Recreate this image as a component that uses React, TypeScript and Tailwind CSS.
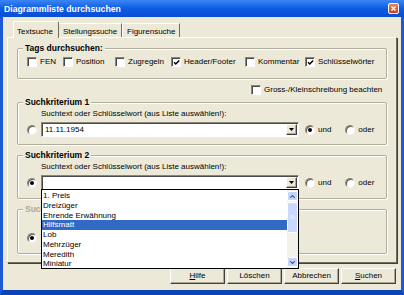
import React from "react";

const face = "bg-[#ECE9D8]";

function Check({ checked }: { checked?: boolean }) {
  return (
    <span className="flex h-[10px] w-[10px] shrink-0 items-center justify-center border border-t-[#8a877a] border-l-[#8a877a] border-r-white border-b-white bg-white shadow-[inset_1px_1px_0_#4a4a44]">
      {checked && (
        <svg width="7" height="7" viewBox="0 0 7 7">
          <path d="M1 3.2 L2.8 5 L6.2 1.4" stroke="#000" strokeWidth="1.5" fill="none" />
        </svg>
      )}
    </span>
  );
}

function Radio({ checked }: { checked?: boolean }) {
  return (
    <span className="flex h-[10px] w-[10px] shrink-0 items-center justify-center rounded-full border border-t-[#8a877a] border-l-[#8a877a] border-r-[#f4f3ee] border-b-[#f4f3ee] bg-white shadow-[inset_1px_1px_0_#5a5a52]">
      {checked && <span className="h-[4px] w-[4px] rounded-full bg-black" />}
    </span>
  );
}

function Group({
  title,
  disabled,
  className,
  children,
}: {
  title: string;
  disabled?: boolean;
  className?: string;
  children?: React.ReactNode;
}) {
  return (
    <div
      className={`relative ml-[9px] w-[370px] rounded-[2px] border border-[#b0ad9f] shadow-[inset_1px_1px_0_#fff,1px_1px_0_#fff] ${className ?? ""}`}
    >
      <span
        className={`absolute left-[5px] top-[-6px] ${face} px-[2px] text-[8.5px] font-bold leading-[10px] ${
          disabled ? "text-[#aca899]" : "text-black"
        }`}
      >
        {title}
      </span>
      {children}
    </div>
  );
}

function Combo({ value, children }: { value?: string; children?: React.ReactNode }) {
  return (
    <div className="relative h-[15px] w-[258px] shrink-0">
      <div className="flex h-full w-full border border-t-[#8a877a] border-l-[#8a877a] border-r-white border-b-white bg-white shadow-[inset_1px_1px_0_#4a4a44]">
        <span className="flex-1 pl-[3px] pt-[1px] text-[8px] leading-[12px]">{value}</span>
        <span className="my-[1px] mr-[1px] flex w-[11px] items-center justify-center border border-t-white border-l-white border-r-[#404040] border-b-[#404040] bg-[#ECE9D8] shadow-[inset_-1px_-1px_0_#aca899]">
          <svg width="5" height="3" viewBox="0 0 5 3">
            <path d="M0 0h5L2.5 3z" fill="#000" />
          </svg>
        </span>
      </div>
      {children}
    </div>
  );
}

const entries = ["1. Preis", "Dreizüger", "Ehrende Erwähnung", "Hilfsmatt", "Lob", "Mehrzüger", "Meredith", "Miniatur"];

function DropList() {
  return (
    <div className="absolute left-0 top-[14px] z-20 flex h-[80px] w-[258px] border border-black bg-white">
      <div className="flex-1 pt-[1px]">
        {entries.map((e) => (
          <div
            key={e}
            className={`h-[9.75px] pl-[1px] text-[8px] leading-[9.75px] ${
              e === "Hilfsmatt" ? "bg-[#316AC5] text-white" : "text-black"
            }`}
          >
            {e}
          </div>
        ))}
      </div>
      <div className="flex w-[11px] flex-col bg-[#f2f1ea] py-[1px]">
        <span className="flex h-[10px] items-center justify-center rounded-[2px] border border-white bg-[#c4d5fb]">
          <svg width="5" height="3" viewBox="0 0 5 3">
            <path d="M0 3 L2.5 0.5 L5 3" stroke="#4d6185" strokeWidth="1.2" fill="none" />
          </svg>
        </span>
        <span className="mt-[1px] flex h-[31px] items-center justify-center rounded-[2px] border border-white bg-[#c9d8fc]">
          <svg width="5" height="5" viewBox="0 0 5 5">
            <path d="M0 1h5M0 3h5" stroke="#eef3ff" strokeWidth="1" />
          </svg>
        </span>
        <span className="flex-1" />
        <span className="flex h-[10px] items-center justify-center rounded-[2px] border border-white bg-[#c4d5fb]">
          <svg width="5" height="3" viewBox="0 0 5 3">
            <path d="M0 0 L2.5 2.5 L5 0" stroke="#4d6185" strokeWidth="1.2" fill="none" />
          </svg>
        </span>
      </div>
    </div>
  );
}

function Btn({ children }: { children: React.ReactNode }) {
  return (
    <div className="flex h-[16px] w-[55px] items-center justify-center border border-t-white border-l-white border-r-[#404040] border-b-[#404040] bg-[#ECE9D8] text-[8px] leading-[10px] shadow-[inset_-1px_-1px_0_#aca899]">
      {children}
    </div>
  );
}

export default function App() {
  const tags: [string, number, boolean][] = [
    ["FEN", 36, false],
    ["Position", 52, false],
    ["Zugregeln", 56, false],
    ["Header/Footer", 74, true],
    ["Kommentar", 60, false],
    ["Schlüsselwörter", 70, true],
  ];

  return (
    <div className="flex h-[295px] w-[404px] flex-col font-['Liberation_Sans',Arial,sans-serif] text-black">
      {/* title bar */}
      <div className="flex h-[17px] shrink-0 items-center justify-between bg-gradient-to-b from-[#3a86f4] via-[#0c5be4] to-[#0a4ed2] pl-[4px] pr-[5px]">
        <span className="text-[8.7px] font-bold leading-[10px] text-white">Diagrammliste durchsuchen</span>
        <span className="flex h-[11px] w-[11px] items-center justify-center rounded-[2px] border border-white bg-gradient-to-b from-[#e9826a] to-[#c8401e]">
          <svg width="5" height="5" viewBox="0 0 5 5">
            <path d="M0.5 0.5 L4.5 4.5 M4.5 0.5 L0.5 4.5" stroke="#fff" strokeWidth="1.3" />
          </svg>
        </span>
      </div>

      {/* dialog body */}
      <div className={`flex flex-1 flex-col border-x-[3px] border-b-[5px] border-x-[#1c5bd8] border-b-[#0d42b8] ${face}`}>
        {/* tabs */}
        <div className="mt-[4px] flex h-[16px] items-end pl-[10px] text-[8px] leading-[10px]">
          <div className={`relative z-10 -mb-[1px] h-[17px] w-[46px] rounded-t-[2px] border-l border-t border-l-white border-t-white border-r border-r-[#716F64] ${face} pl-[3px] pt-[5px]`}>
            Textsuche
          </div>
          <div className="h-[14px] w-[63px] border-r border-t border-r-[#716F64] border-t-white pl-[4px] pt-[3px]">
            Stellungssuche
          </div>
          <div className="h-[14px] w-[58px] border-r border-t border-r-[#716F64] border-t-white pl-[5px] pt-[3px] shadow-[inset_1px_0_0_#fff]">
            Figurensuche
          </div>
        </div>

        {/* panel */}
        <div className="ml-[4px] h-[226px] w-[390px] border border-t-white border-l-white border-r-[#716F64] border-b-[#716F64] shadow-[1px_1px_0_#404040] text-[8px] leading-[10px]">
          <Group title="Tags durchsuchen:" className="mt-[10px] h-[31px]">
            <div className="flex pl-[9px] pt-[8px]">
              {tags.map(([label, w, on]) => (
                <div key={label} className="flex shrink-0 items-center gap-[3px]" style={{ width: w }}>
                  <Check checked={on} />
                  <span>{label}</span>
                </div>
              ))}
            </div>
          </Group>

          <div className="mt-[6px] flex items-center gap-[3px] pl-[243px]">
            <Check />
            <span>Gross-/Kleinschreibung beachten</span>
          </div>

          <Group title="Suchkriterium 1" className="mt-[7px] h-[43px]">
            <div className="pl-[23px] pt-[6px]">Suchtext oder Schlüsselwort (aus Liste auswählen!):</div>
            <div className="mt-[3px] flex items-center pl-[9px]">
              <Radio />
              <span className="ml-[4px]">
                <Combo value="11.11.1954" />
              </span>
              <span className="ml-[6px]">
                <Radio checked />
              </span>
              <span className="ml-[3px]">und</span>
              <span className="ml-[14px]">
                <Radio />
              </span>
              <span className="ml-[3px]">oder</span>
            </div>
          </Group>

          <Group title="Suchkriterium 2" className="mt-[10px] h-[44px]">
            <div className="pl-[23px] pt-[6px]">Suchtext oder Schlüsselwort (aus Liste auswählen!):</div>
            <div className="mt-[3px] flex items-center pl-[9px]">
              <Radio checked />
              <span className="ml-[4px]">
                <Combo>
                  <DropList />
                </Combo>
              </span>
              <span className="ml-[6px]">
                <Radio />
              </span>
              <span className="ml-[3px]">und</span>
              <span className="ml-[14px]">
                <Radio />
              </span>
              <span className="ml-[3px]">oder</span>
            </div>
          </Group>

          <Group title="Suchkriterium 3" disabled className="mt-[10px] h-[45px]">
            <div className="flex items-center pl-[9px] pt-[23px]">
              <Radio checked />
            </div>
          </Group>
        </div>

        {/* buttons */}
        <div className="mt-[5px] flex justify-end gap-[2px] pr-[5px]">
          <Btn>
            <span>
              <span className="underline">H</span>ilfe
            </span>
          </Btn>
          <Btn>Löschen</Btn>
          <Btn>Abbrechen</Btn>
          <Btn>
            <span>
              <span className="underline">S</span>uchen
            </span>
          </Btn>
        </div>
      </div>
    </div>
  );
}
